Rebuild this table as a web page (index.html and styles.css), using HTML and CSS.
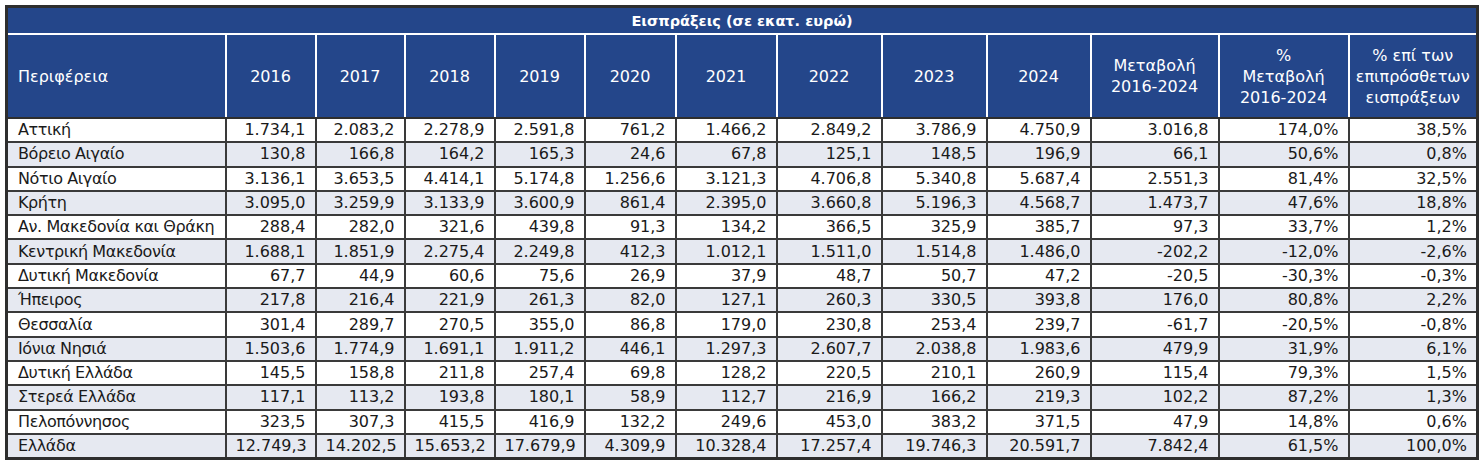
FILE: index.html
```html
<!DOCTYPE html>
<html lang="el">
<head>
<meta charset="utf-8">
<title>Εισπράξεις</title>
<link rel="stylesheet" href="styles.css">
</head>
<body>
<table class="data">
<colgroup>
<col class="w-region"><col class="w90"><col class="w89"><col class="w90"><col class="w90"><col class="w91"><col class="w101"><col class="w105"><col class="w105"><col class="w104"><col class="w128"><col class="w130"><col class="w129">
</colgroup>
<thead>
<tr class="title-row"><th colspan="13">Εισπράξεις (σε εκατ. ευρώ)</th></tr>
<tr class="head-row">
<th class="h-region">Περιφέρεια</th><th>2016</th><th>2017</th><th>2018</th><th>2019</th><th>2020</th><th>2021</th><th>2022</th><th>2023</th><th>2024</th><th>Μεταβολή<br>2016-2024</th><th>%<br>Μεταβολή<br>2016-2024</th><th>% επί των<br>επιπρόσθετων<br>εισπράξεων</th>
</tr>
</thead>
<tbody>
<tr><td>Αττική</td><td>1.734,1</td><td>2.083,2</td><td>2.278,9</td><td>2.591,8</td><td>761,2</td><td>1.466,2</td><td>2.849,2</td><td>3.786,9</td><td>4.750,9</td><td>3.016,8</td><td>174,0%</td><td>38,5%</td></tr>
<tr><td>Βόρειο Αιγαίο</td><td>130,8</td><td>166,8</td><td>164,2</td><td>165,3</td><td>24,6</td><td>67,8</td><td>125,1</td><td>148,5</td><td>196,9</td><td>66,1</td><td>50,6%</td><td>0,8%</td></tr>
<tr><td>Νότιο Αιγαίο</td><td>3.136,1</td><td>3.653,5</td><td>4.414,1</td><td>5.174,8</td><td>1.256,6</td><td>3.121,3</td><td>4.706,8</td><td>5.340,8</td><td>5.687,4</td><td>2.551,3</td><td>81,4%</td><td>32,5%</td></tr>
<tr><td>Κρήτη</td><td>3.095,0</td><td>3.259,9</td><td>3.133,9</td><td>3.600,9</td><td>861,4</td><td>2.395,0</td><td>3.660,8</td><td>5.196,3</td><td>4.568,7</td><td>1.473,7</td><td>47,6%</td><td>18,8%</td></tr>
<tr><td>Αν. Μακεδονία και Θράκη</td><td>288,4</td><td>282,0</td><td>321,6</td><td>439,8</td><td>91,3</td><td>134,2</td><td>366,5</td><td>325,9</td><td>385,7</td><td>97,3</td><td>33,7%</td><td>1,2%</td></tr>
<tr><td>Κεντρική Μακεδονία</td><td>1.688,1</td><td>1.851,9</td><td>2.275,4</td><td>2.249,8</td><td>412,3</td><td>1.012,1</td><td>1.511,0</td><td>1.514,8</td><td>1.486,0</td><td>-202,2</td><td>-12,0%</td><td>-2,6%</td></tr>
<tr><td>Δυτική Μακεδονία</td><td>67,7</td><td>44,9</td><td>60,6</td><td>75,6</td><td>26,9</td><td>37,9</td><td>48,7</td><td>50,7</td><td>47,2</td><td>-20,5</td><td>-30,3%</td><td>-0,3%</td></tr>
<tr><td>Ήπειρος</td><td>217,8</td><td>216,4</td><td>221,9</td><td>261,3</td><td>82,0</td><td>127,1</td><td>260,3</td><td>330,5</td><td>393,8</td><td>176,0</td><td>80,8%</td><td>2,2%</td></tr>
<tr><td>Θεσσαλία</td><td>301,4</td><td>289,7</td><td>270,5</td><td>355,0</td><td>86,8</td><td>179,0</td><td>230,8</td><td>253,4</td><td>239,7</td><td>-61,7</td><td>-20,5%</td><td>-0,8%</td></tr>
<tr><td>Ιόνια Νησιά</td><td>1.503,6</td><td>1.774,9</td><td>1.691,1</td><td>1.911,2</td><td>446,1</td><td>1.297,3</td><td>2.607,7</td><td>2.038,8</td><td>1.983,6</td><td>479,9</td><td>31,9%</td><td>6,1%</td></tr>
<tr><td>Δυτική Ελλάδα</td><td>145,5</td><td>158,8</td><td>211,8</td><td>257,4</td><td>69,8</td><td>128,2</td><td>220,5</td><td>210,1</td><td>260,9</td><td>115,4</td><td>79,3%</td><td>1,5%</td></tr>
<tr><td>Στερεά Ελλάδα</td><td>117,1</td><td>113,2</td><td>193,8</td><td>180,1</td><td>58,9</td><td>112,7</td><td>216,9</td><td>166,2</td><td>219,3</td><td>102,2</td><td>87,2%</td><td>1,3%</td></tr>
<tr><td>Πελοπόννησος</td><td>323,5</td><td>307,3</td><td>415,5</td><td>416,9</td><td>132,2</td><td>249,6</td><td>453,0</td><td>383,2</td><td>371,5</td><td>47,9</td><td>14,8%</td><td>0,6%</td></tr>
<tr><td>Ελλάδα</td><td>12.749,3</td><td>14.202,5</td><td>15.653,2</td><td>17.679,9</td><td>4.309,9</td><td>10.328,4</td><td>17.257,4</td><td>19.746,3</td><td>20.591,7</td><td>7.842,4</td><td>61,5%</td><td>100,0%</td></tr>
</tbody>
</table>
</body>
</html>
```

FILE: styles.css
```css
html, body {
  margin: 0;
  padding: 0;
  background: #ffffff;
}

body {
  padding: 5px 0 0 5px;
  font-family: "DejaVu Sans", "Noto Sans", sans-serif;
  color: #1a1a1a;
}

.data {
  border-collapse: collapse;
  table-layout: fixed;
  width: 1471px;
  border: 3px solid #2e2e2e;
  font-size: 16px;
}

.w-region { width: 219px; }
.w89 { width: 89px; }
.w90 { width: 90px; }
.w91 { width: 91px; }
.w101 { width: 101px; }
.w104 { width: 104px; }
.w105 { width: 105px; }
.w128 { width: 128px; }
.w130 { width: 130px; }
.w129 { width: 129px; }

.data th {
  background: #24468a;
  color: #ffffff;
  font-weight: normal;
  padding: 0;
  border: 2px solid #ffffff;
}

.title-row th {
  height: 25px;
  font-weight: bold;
  font-size: 14.5px;
  text-align: center;
}

.head-row th {
  height: 82px;
  text-align: center;
  line-height: 21px;
  border-bottom: 2px solid #2e2e2e;
}

.head-row th.h-region {
  text-align: left;
  padding-left: 10px;
}

.data td {
  height: 22.3px;
  padding: 0 9px 0 9px;
  border: 2px solid #3a3a3a;
  text-align: right;
  line-height: 20px;
  white-space: nowrap;
}

.data td:first-child {
  text-align: left;
  padding-left: 10px;
  letter-spacing: -0.4px;
}

.data tbody tr:nth-child(even) td {
  background: #e6e9f1;
}
```
